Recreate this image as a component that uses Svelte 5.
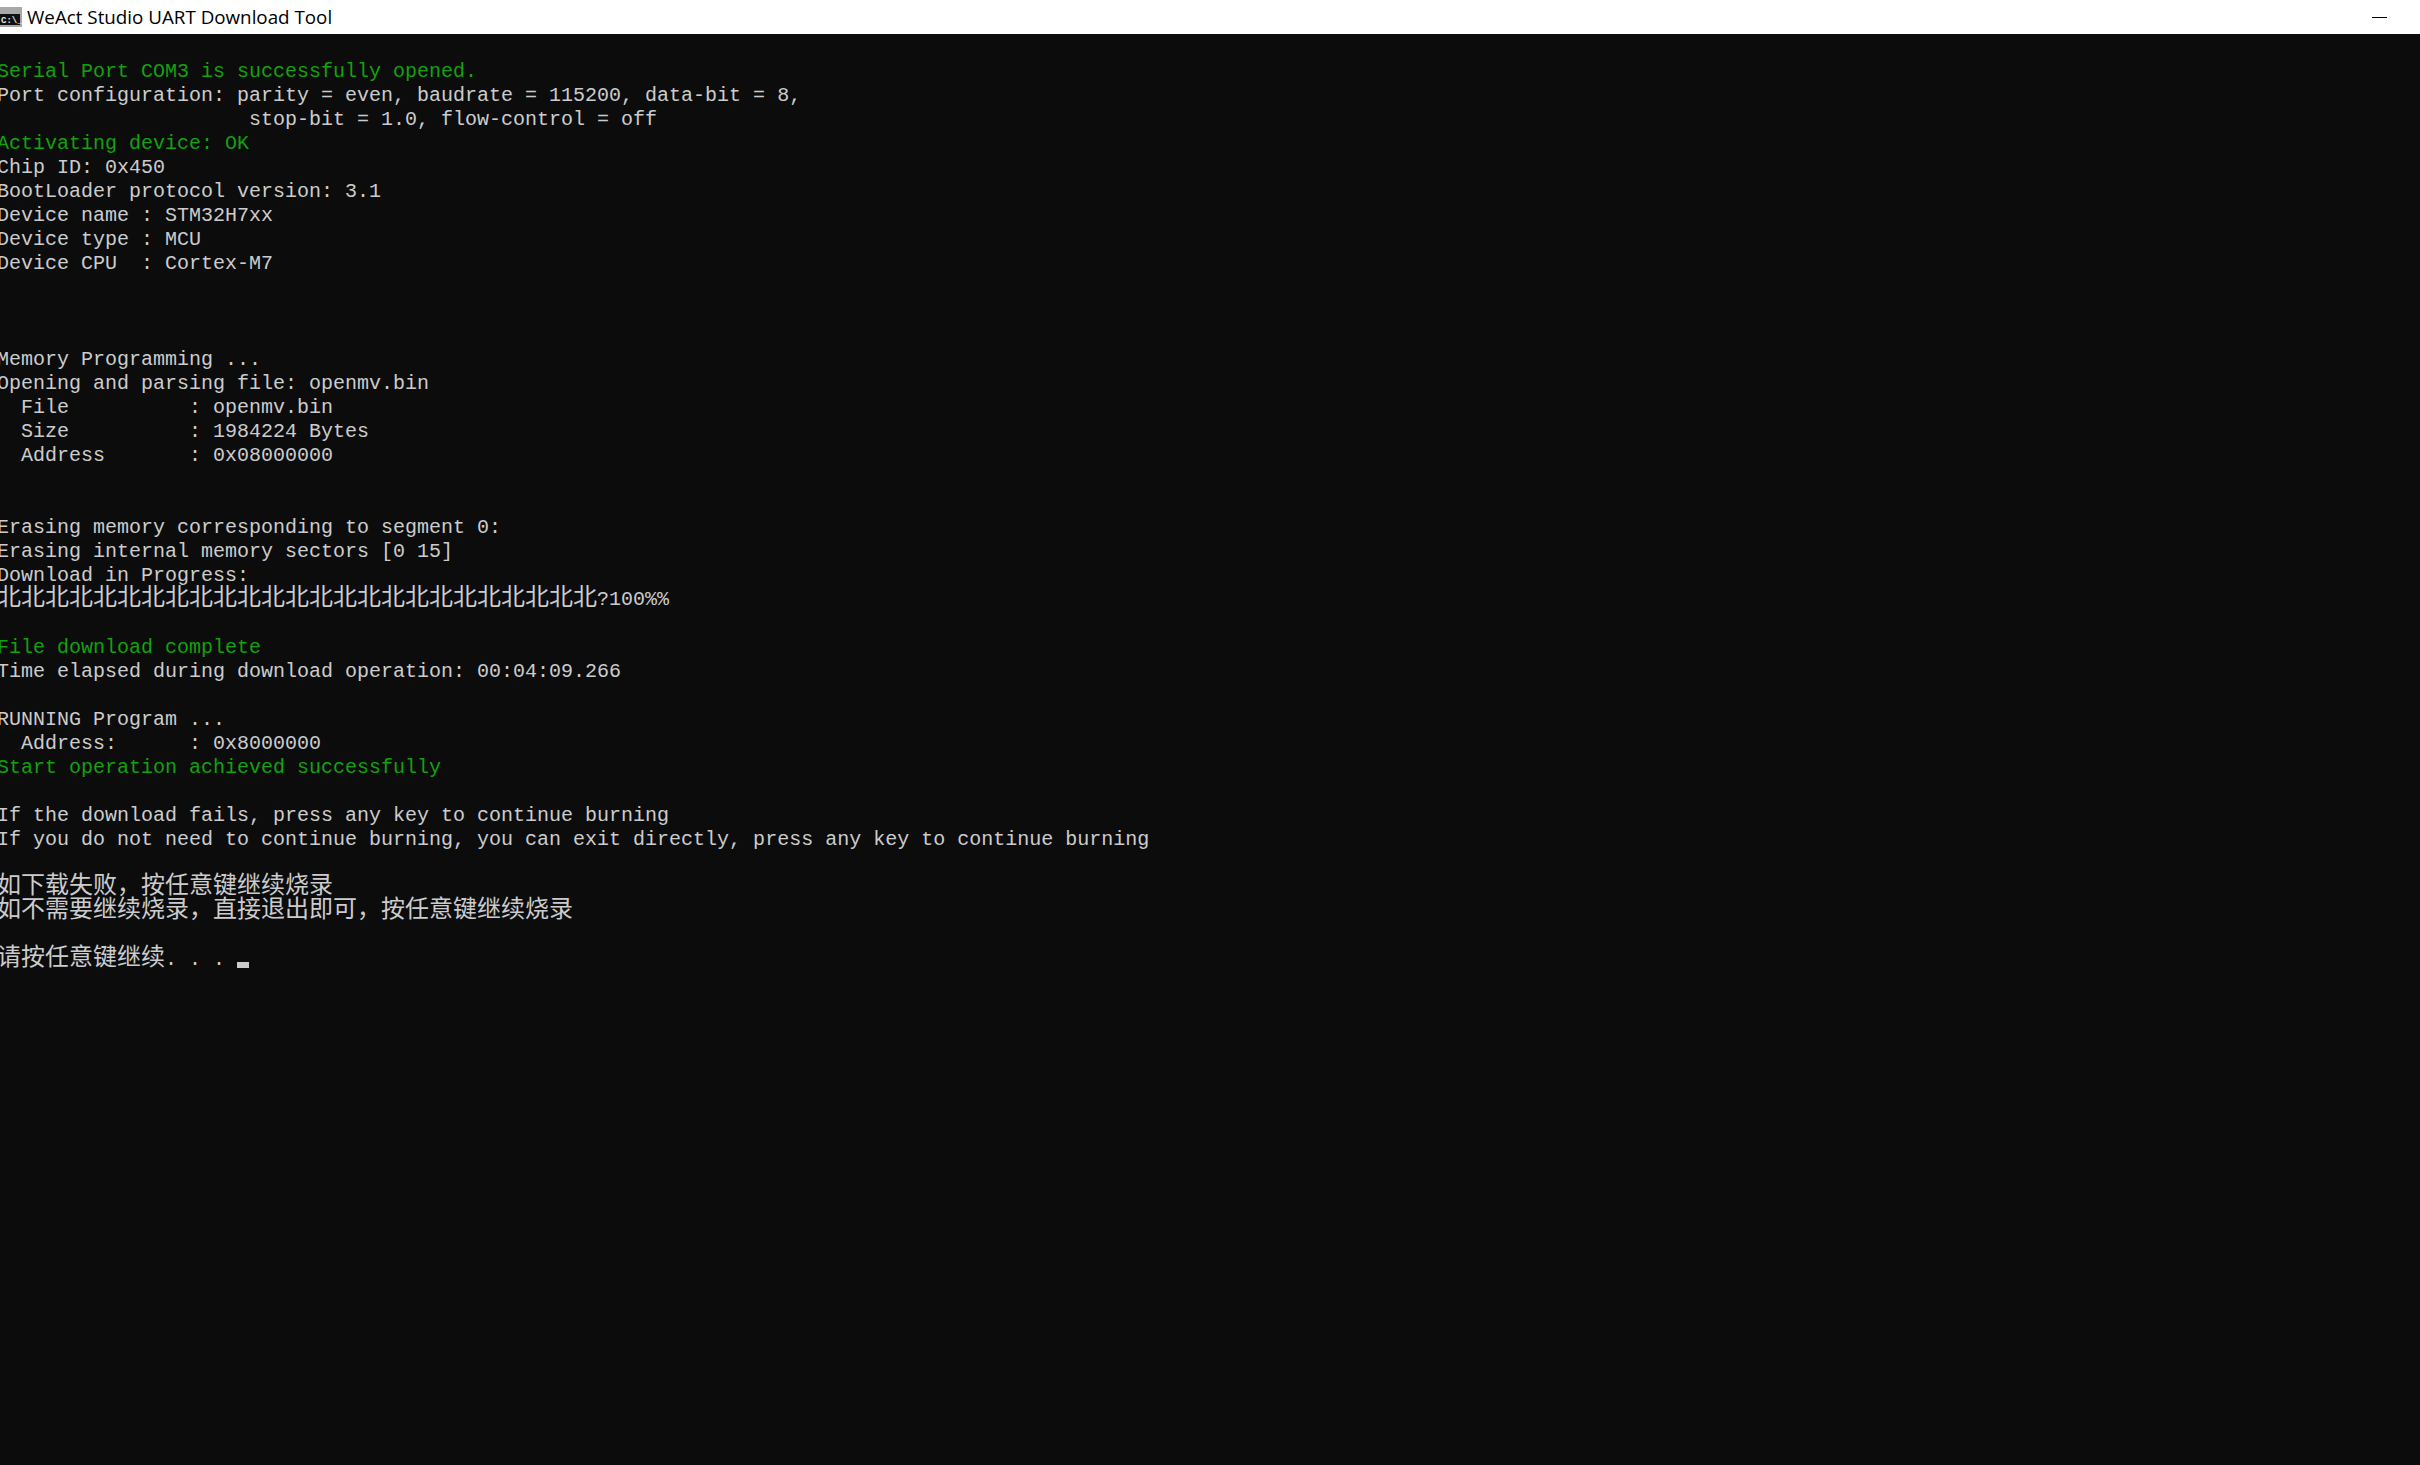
<script lang="ts">
	const G = 'ok';
	const lines: [string, string?][] = [
		[''],
		['Serial Port COM3 is successfully opened.', G],
		['Port configuration: parity = even, baudrate = 115200, data-bit = 8,'],
		['                     stop-bit = 1.0, flow-control = off'],
		['Activating device: OK', G],
		['Chip ID: 0x450'],
		['BootLoader protocol version: 3.1'],
		['Device name : STM32H7xx'],
		['Device type : MCU'],
		['Device CPU  : Cortex-M7'],
		[''],
		[''],
		[''],
		['Memory Programming ...'],
		['Opening and parsing file: openmv.bin'],
		['  File          : openmv.bin'],
		['  Size          : 1984224 Bytes'],
		['  Address       : 0x08000000'],
		[''],
		[''],
		['Erasing memory corresponding to segment 0:'],
		['Erasing internal memory sectors [0 15]'],
		['Download in Progress:'],
		['北'.repeat(25) + '?100%%'],
		[''],
		['File download complete', G],
		['Time elapsed during download operation: 00:04:09.266'],
		[''],
		['RUNNING Program ...'],
		['  Address:      : 0x8000000'],
		['Start operation achieved successfully', G],
		[''],
		['If the download fails, press any key to continue burning'],
		['If you do not need to continue burning, you can exit directly, press any key to continue burning'],
		[''],
		['如下载失败，按任意键继续烧录'],
		['如不需要继续烧录，直接退出即可，按任意键继续烧录'],
		['']
	];

	// console cells: CJK takes two cells, so it needs its own font size
	const split = (s: string) => s.split(/([^\x00-\x7f]+)/);
</script>

<div class="window">
	<header class="titlebar">
		<svg class="app-icon" width="22" height="20" viewBox="0 0 22 20">
			<rect width="22" height="20" fill="#a8a8a8" />
			<rect x="0" y="7" width="20" height="11" fill="#111" />
			<text x="1" y="16" class="icon-text">C:\_</text>
		</svg>
		<span class="title">WeAct Studio UART Download Tool</span>
		<span class="minimize"></span>
	</header>
	<main class="console">
		{#each lines as [text, tone]}
			<div class="line" class:ok={tone === G}>{#each split(text) as part, i}{#if i % 2}<span class="wide">{part}</span>{:else}{part}{/if}{/each}</div>
		{/each}
		<div class="line"><span class="wide">请按任意键继续</span>. . . <span class="cursor"></span></div>
	</main>
</div>

<style>
	:global(body) {
		margin: 0;
		background: #0c0c0c;
	}

	.window {
		display: flex;
		flex-direction: column;
		height: 100vh;
		overflow: hidden;
	}

	.titlebar {
		display: flex;
		align-items: center;
		flex: 0 0 34px;
		background: #fff;
		color: #000;
	}

	.app-icon {
		flex: none;
		margin-right: 5px;
	}

	.icon-text {
		font-family: "Liberation Mono", monospace;
		font-size: 9px;
		font-weight: 700;
		fill: #e8e8e8;
	}

	.title {
		font-family: "Open Sans", "Noto Sans", sans-serif;
		font-size: 18.8px;
	}

	.minimize {
		width: 15px;
		height: 1px;
		background: #000;
		margin-left: auto;
		margin-right: 33px;
	}

	.console {
		flex: 1;
		margin-left: -3px;
		padding-top: 2px;
		background: #0c0c0c;
		color: #ccc;
		font-family: "Liberation Mono", "Noto Sans CJK SC", monospace;
		font-size: 20px;
	}

	.line {
		height: 24px;
		line-height: 24px;
		white-space: pre;
	}

	.wide {
		font-family: "Noto Sans CJK SC", sans-serif;
		font-size: 24px;
		line-height: 0;
	}

	.ok {
		color: #13a10e;
	}

	.cursor {
		display: inline-block;
		width: 12px;
		height: 6px;
		background: #ccc;
		vertical-align: -3px;
	}
</style>
